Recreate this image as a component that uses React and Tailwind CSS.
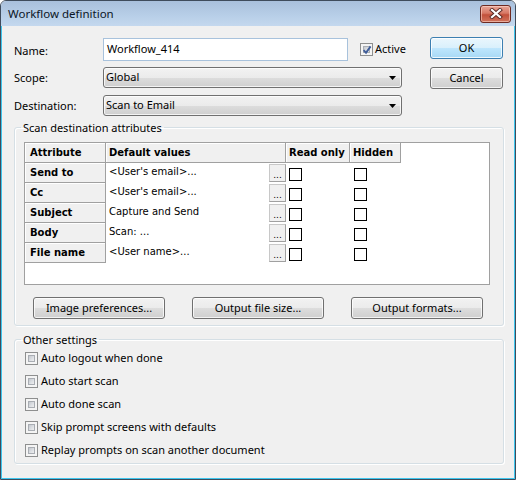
import React from "react";

function Button({ children, className = "", primary = false }) {
  return (
    <div
      className={`flex items-center justify-center rounded-[3px] border text-black ${
        primary
          ? "border-[#3c7fb1] bg-[linear-gradient(to_bottom,#eaf6fd_0%,#d9f0fc_50%,#bee6fd_51%,#a7d9f5_100%)] shadow-[inset_0_0_0_1px_rgba(255,255,255,0.8)]"
          : "border-[#707070] bg-[linear-gradient(to_bottom,#f2f2f2_0%,#ebebeb_50%,#dddddd_51%,#cfcfcf_100%)] shadow-[inset_0_0_0_1px_rgba(255,255,255,0.75)]"
      } ${className}`}
    >
      {children}
    </div>
  );
}

function Check7({ checked = false }) {
  return (
    <div className="relative w-[13px] h-[13px] shrink-0 border border-[#8e8f8f] bg-[#f4f4f4] p-[2px]">
      <div className="w-full h-full border border-[#a9adb3] bg-[linear-gradient(135deg,#c3c7cd_0%,#dcdfe3_55%,#eeeeee_100%)]" />
      {checked && (
        <svg className="absolute left-[1px] top-[1px]" width="10" height="10" viewBox="0 0 10 10">
          <path d="M1.6 5.2 L4 7.8 L8.6 1.4" fill="none" stroke="#3f5d99" strokeWidth="1.9" />
        </svg>
      )}
    </div>
  );
}

function Select({ value }) {
  return (
    <div className="w-[299px] h-[21px] flex items-center justify-between pl-[2px] pr-[5px] rounded-[3px] border border-[#707070] bg-[linear-gradient(to_bottom,#f2f2f2_0%,#ebebeb_50%,#dddddd_51%,#cfcfcf_100%)] shadow-[inset_0_0_0_1px_rgba(255,255,255,0.75)]">
      <span>{value}</span>
      <svg width="7" height="4" viewBox="0 0 7 4">
        <path d="M0 0 H7 L3.5 4 Z" fill="#000" />
      </svg>
    </div>
  );
}

function TblCheck() {
  return <div className="w-[13px] h-[13px] border border-black bg-white" />;
}

const rows = [
  ["Send to", "<User's email>..."],
  ["Cc", "<User's email>..."],
  ["Subject", "Capture and Send"],
  ["Body", "Scan: ..."],
  ["File name", "<User name>..."],
];

function AttrTable() {
  const hdr =
    "bg-[#f0f0f0] border-r border-b border-[#a0a0a0] shadow-[inset_1px_1px_0_#ffffff] flex items-center font-bold";
  return (
    <div className="w-[466px] h-[143px] border border-[#a0a0a0] bg-white font-['DejaVu_Sans',sans-serif] text-[10px] text-black">
      <div className="grid h-full grid-cols-[81px_180px_64px_51px_1fr] grid-rows-[20px_20px_20px_20px_20px_20px_1fr]">
        <div className={`${hdr} pl-[5px]`}>Attribute</div>
        <div className={`${hdr} pl-[3px]`}>Default values</div>
        <div className={`${hdr} pl-[3px]`}>Read only</div>
        <div className={`${hdr} pl-[3px]`}>Hidden</div>
        <div className="bg-white" />
        {rows.map(([a, v]) => (
          <React.Fragment key={a}>
            <div className={`${hdr} pl-[5px]`}>{a}</div>
            <div className="flex items-stretch">
              <div className="flex-1 flex items-center pl-[3px] pb-[3px]">{v}</div>
              <div className="w-[17px] my-[1px] flex items-end justify-center bg-[#f0f0f0] border-l border-t border-[#c8c8c8] border-r border-b border-r-[#a0a0a0] border-b-[#a0a0a0] leading-none pb-[1px] text-[9px]">
                ...
              </div>
            </div>
            <div className="flex items-center pl-[3px] pt-[2px]">
              <TblCheck />
            </div>
            <div className="flex items-center pl-[4px] pt-[2px]">
              <TblCheck />
            </div>
            <div />
          </React.Fragment>
        ))}
        <div className="col-span-5 bg-white" />
      </div>
    </div>
  );
}

export default function App() {
  return (
    <div className="w-[516px] h-[480px] flex flex-col border border-[#3f4c5c] rounded-t-[6px] overflow-hidden font-['Noto_Sans',sans-serif] text-[11px] text-black bg-[#f0f0f0]">
      <div className="h-[25px] shrink-0 flex items-center justify-between pl-[7px] pr-[4px] bg-[linear-gradient(to_bottom,#a9c0dc_0%,#b8cfe8_60%,#c4d8ee_100%)]">
        <span className="text-[11.5px] text-[#0b1526]">Workflow definition</span>
        <div className="w-[31px] h-[18px] flex items-center justify-center rounded-[3px] border border-[#6e2a22] bg-[linear-gradient(to_bottom,#e8a597_0%,#d77865_45%,#c2503b_55%,#d0735c_100%)] shadow-[inset_0_0_0_1px_rgba(255,220,210,0.55)]">
          <svg width="14" height="11" viewBox="0 0 14 11">
            <path d="M3 2 L11 9 M11 2 L3 9" stroke="#5a2a25" strokeWidth="4" strokeLinecap="square" />
            <path d="M3 2 L11 9 M11 2 L3 9" stroke="#ffffff" strokeWidth="2.2" strokeLinecap="square" />
          </svg>
        </div>
      </div>

      <div className="flex-1 flex flex-col border-l border-r border-b border-[#3ec6ee] pt-[11px] pl-[12px] pr-[10px]">
        <div className="flex justify-between">
          <div className="flex flex-col">
            <div className="flex items-center h-[23px] mt-[1px]">
              <span className="w-[89px] pt-[3px]">Name:</span>
              <div className="w-[245px] h-[23px] flex items-center pl-[3px] bg-white border border-[#a8c2dc]">
                Workflow_414
              </div>
              <div className="ml-[12px] flex items-center gap-[2px]">
                <Check7 checked />
                <span>Active</span>
              </div>
            </div>
            <div className="flex items-center mt-[6px]">
              <span className="w-[89px] pt-[1px]">Scope:</span>
              <Select value="Global" />
            </div>
            <div className="flex items-center mt-[7px]">
              <span className="w-[89px] pt-[1px]">Destination:</span>
              <Select value="Scan to Email" />
            </div>
          </div>
          <div className="flex flex-col mr-[1px]">
            <Button primary className="w-[73px] h-[22px]">OK</Button>
            <Button className="w-[73px] h-[22px] mt-[8px]">Cancel</Button>
          </div>
        </div>

        <fieldset className="mt-[4px] border border-[#d5dfe5] rounded-[3px] shadow-[inset_1px_1px_0_#ffffff,1px_1px_0_#ffffff]">
          <legend className="ml-[6px] px-[2px] leading-[15px]">Scan destination attributes</legend>
          <div className="pl-[9px] pr-[13px] pb-[6px]">
            <div className="mt-[7px]">
              <AttrTable />
            </div>
            <div className="flex gap-[27px] ml-[9px] mt-[12px]">
              <Button className="w-[132px] h-[22px]">Image preferences...</Button>
              <Button className="w-[132px] h-[22px]">Output file size...</Button>
              <Button className="w-[132px] h-[22px]">Output formats...</Button>
            </div>
          </div>
        </fieldset>

        <fieldset className="mt-[6px] border border-[#d5dfe5] rounded-[3px] shadow-[inset_1px_1px_0_#ffffff,1px_1px_0_#ffffff]">
          <legend className="ml-[6px] px-[2px] leading-[15px]">Other settings</legend>
          <div className="pl-[10px] pb-[1px] flex flex-col">
            {[
              "Auto logout when done",
              "Auto start scan",
              "Auto done scan",
              "Skip prompt screens with defaults",
              "Replay prompts on scan another document",
            ].map((t) => (
              <div key={t} className="h-[23px] flex items-center gap-[3px]">
                <Check7 />
                <span>{t}</span>
              </div>
            ))}
          </div>
        </fieldset>
      </div>
    </div>
  );
}
